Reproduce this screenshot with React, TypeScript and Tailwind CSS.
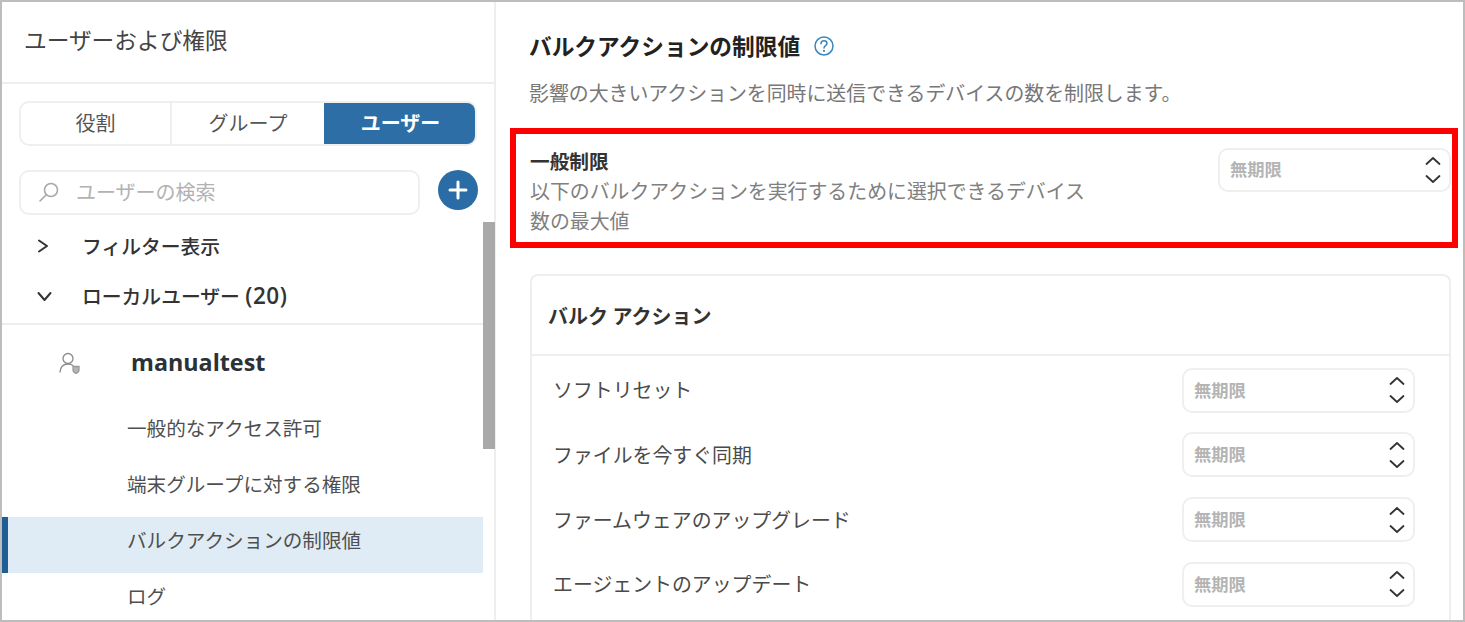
const jp = "font-['Noto_Sans_CJK_JP','Noto_Sans',sans-serif]";

function Stepper() {
  return (
    <svg width="18" height="32" viewBox="0 0 18 32" fill="none" stroke="#333" strokeWidth="1.8" strokeLinecap="round" strokeLinejoin="round">
      <path d="M2.5 10 L9 4 L15.5 10" />
      <path d="M2.5 22 L9 28 L15.5 22" />
    </svg>
  );
}

function LimitSelect({ className }: { className: string }) {
  return (
    <div className={`flex items-center justify-between rounded-[10px] border-2 border-[#efefef] bg-white pl-[10px] pr-[7px] ${className}`}>
      <span className="pb-[2px] text-[17.3px] font-bold leading-none text-[#b4b4b4]">無期限</span>
      <Stepper />
    </div>
  );
}

function Row({ label }: { label: string }) {
  return (
    <div className="flex h-[64.7px] shrink-0 items-center justify-between pl-[21px] pr-[34px]">
      <span className="text-[19.9px] leading-none text-[#4a4a4a]">{label}</span>
      <LimitSelect className="h-[45px] w-[233px]" />
    </div>
  );
}

function NavItem({ label, active }: { label: string; active?: boolean }) {
  return (
    <div className={`flex h-[56px] shrink-0 items-center border-l-[6px] pb-[10px] pl-[119px] text-[19.6px] leading-none text-[#4f4f4f] ${active ? "border-[#1f5d94] bg-[#e0ecf5]" : "border-transparent"}`}>
      {label}
    </div>
  );
}

export default function App() {
  return (
    <div className={`relative flex h-[622px] w-[1465px] overflow-hidden border-2 border-[#bdbdbd] bg-white ${jp}`}>
      <aside className="relative flex w-[494px] shrink-0 flex-col border-r-2 border-[#eeeeee]">
        <div className="flex h-[82px] shrink-0 items-center border-b-2 border-[#eeeeee] pb-[4px] pl-[22px] text-[22.7px] leading-none text-[#444]">
          ユーザーおよび権限
        </div>

        <div className="mx-[17px] mt-[17px] flex h-[45px] w-[458px] shrink-0 overflow-hidden rounded-[10px] border-2 border-[#efefef] text-[20px] leading-none">
          <div className="flex w-[151px] items-center justify-center border-r-2 border-[#efefef] pb-[2px] text-[#555]">役割</div>
          <div className="flex w-[152px] items-center justify-center pb-[2px] text-[#555]">グループ</div>
          <div className="-my-[2px] -mr-[2px] flex flex-1 items-center justify-center bg-[#2e6ea6] pb-[2px] font-bold text-white">ユーザー</div>
        </div>

        <div className="ml-[17px] mr-[16px] mt-[24px] flex shrink-0 items-start justify-between">
          <div className="flex h-[45px] w-[401px] items-center rounded-[10px] border-2 border-[#efefef] pb-[2px] pl-[17px]">
            <svg width="22" height="22" viewBox="0 0 22 22" fill="none" stroke="#a8a8a8" strokeWidth="1.6" strokeLinecap="round">
              <circle cx="13" cy="9" r="6.5" />
              <path d="M8 14 L2 20" />
            </svg>
            <span className="ml-[16px] text-[20px] leading-none text-[#b2b2b2]">ユーザーの検索</span>
          </div>
          <div className="flex h-[40px] w-[40px] items-center justify-center rounded-full bg-[#2a6ca5]">
            <svg width="22" height="22" viewBox="0 0 22 22" fill="none" stroke="#fff" strokeWidth="3" strokeLinecap="round">
              <path d="M11 3 V19 M3 11 H19" />
            </svg>
          </div>
        </div>

        <div className="flex h-[50px] shrink-0 items-center pl-[35px] pt-[12px] text-[19.8px] font-medium leading-none text-[#333]">
          <svg width="13" height="14" viewBox="0 0 13 14" fill="none" stroke="#333" strokeWidth="2" strokeLinecap="round" strokeLinejoin="round">
            <path d="M2 1.5 L10 7 L2 12.5" />
          </svg>
          <span className="ml-[32px]">フィルター表示</span>
        </div>

        <div className="flex h-[60px] shrink-0 items-center border-b-2 border-[#eeeeee] pl-[35px] pt-[4px] text-[19.8px] font-medium leading-none text-[#333]">
          <svg width="15" height="11" viewBox="0 0 15 11" fill="none" stroke="#333" strokeWidth="2" strokeLinecap="round" strokeLinejoin="round">
            <path d="M1.5 2 L7.5 9 L13.5 2" />
          </svg>
          <span className="ml-[30px]">ローカルユーザー <span className="ml-[1px] font-['Open_Sans'] text-[22.5px] font-semibold tracking-[0.5px]">(20)</span></span>
        </div>

        <div className="flex h-[74px] shrink-0 items-center pl-[56px] pt-[2px]">
          <svg width="24" height="24" viewBox="0 0 24 24" fill="none" stroke="#8a8a8a" strokeWidth="1.3" strokeLinecap="round">
            <circle cx="10" cy="7.5" r="5" />
            <path d="M2 21 C2.5 16 5.5 13 10 13 C12 13 13.5 13.5 15 14.5" />
            <path d="M15 15.5 H21 V19 C21 20.8 19.5 21.8 18 22.5 C16.5 21.8 15 20.8 15 19 Z" fill="#b5b5b5" stroke="#9a9a9a" />
          </svg>
          <span className="ml-[49px] font-['Open_Sans'] text-[23.3px] font-bold leading-none text-[#2b3138]">manualtest</span>
        </div>

        <div className="h-[6px] shrink-0" />
        <div className="-mr-[10px] w-[481px]">
          <NavItem label="一般的なアクセス許可" />
          <NavItem label="端末グループに対する権限" />
          <NavItem label="バルクアクションの制限値" active />
          <NavItem label="ログ" />
        </div>

        <div className="absolute -right-[1px] top-[220px] h-[227px] w-[12px] bg-[#a9a9a9]" />
      </aside>

      <main className="flex min-w-0 flex-1 flex-col pl-[33px] pr-[12px]">
        <div className="mt-[27px] flex h-[34px] shrink-0 items-center">
          <h1 className="text-[22.7px] font-bold leading-none text-[#222]">バルクアクションの制限値</h1>
          <svg className="ml-[13px]" width="22" height="22" viewBox="0 0 22 22" fill="none" stroke="#3a86bd" strokeWidth="1.5" strokeLinecap="round">
            <circle cx="11" cy="11" r="9" />
            <path d="M8 8.7 C8 6.8 9.4 5.8 11 5.8 C12.7 5.8 14 6.9 14 8.5 C14 10.6 11 10.8 11 13" />
            <path d="M11 15.8 V16" strokeWidth="2" />
          </svg>
        </div>

        <p className="mt-[20px] whitespace-nowrap text-[19.9px] leading-none text-[#777]">
          影響の大きいアクションを同時に送信できるデバイスの数を制限します。
        </p>

        <div className="relative mt-[45px] flex h-[88px] shrink-0 items-start justify-between pl-[1px]">
          <div className="w-[560px]">
            <div className="text-[19.7px] font-bold leading-[26px] text-[#333]">一般制限</div>
            <div className="mt-[2px] text-[19.9px] leading-[30px] text-[#808080]">
              以下のバルクアクションを実行するために選択できるデバイス数の最大値
            </div>
          </div>
          <LimitSelect className="h-[44px] w-[233px]" />
        </div>

        <section className="ml-[1px] mt-[38px] flex flex-1 flex-col overflow-hidden rounded-t-[8px] border-2 border-b-0 border-[#eeeeee]">
          <div className="flex h-[80px] shrink-0 items-center border-b-2 border-[#eeeeee] pl-[16px] pt-[2px] text-[20px] font-bold leading-none text-[#333]">
            バルク アクション
          </div>
          <div className="pt-[2px]">
            <Row label="ソフトリセット" />
            <Row label="ファイルを今すぐ同期" />
            <Row label="ファームウェアのアップグレード" />
            <Row label="エージェントのアップデート" />
          </div>
        </section>
      </main>

      <div className="pointer-events-none absolute left-[508px] top-[126px] h-[120px] w-[948px] border-[6px] border-[#ff0000]" />
    </div>
  );
}
